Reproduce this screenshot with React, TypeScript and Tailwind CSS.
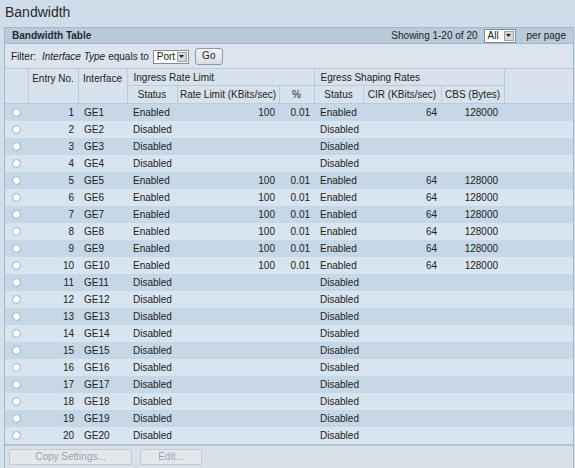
import { FC } from 'react';

type Row = {
  id: number;
  enabled: boolean;
};

const rows: Row[] = Array.from({ length: 20 }, (_, i) => ({
  id: i + 1,
  enabled: i === 0 || (i >= 4 && i <= 9),
}));

const Radio: FC = () => (
  <span className="inline-block h-[9px] w-[9px] rounded-full border border-[#a3aeb9] bg-[radial-gradient(circle_at_40%_40%,#ffffff_50%,#e4e9ee_100%)] align-middle" />
);

const Select: FC<{ value: string; width: string }> = ({ value, width }) => (
  <span className={`inline-flex h-[14px] ${width} items-center justify-between border border-[#7f8c99] bg-white pl-[3px] pr-[1px] align-middle`}>
    <span className="leading-none">{value}</span>
    <span className="flex h-[10px] w-[10px] items-center justify-center border border-[#9aa0a6] bg-[#d7d7d7]">
      <svg width="5" height="3" viewBox="0 0 5 3">
        <path d="M0 0h5L2.5 3z" fill="#222" />
      </svg>
    </span>
  </span>
);

export default function App() {
  return (
    <div
      className="h-[468px] w-[575px] overflow-hidden whitespace-nowrap bg-gradient-to-b from-[#cfdcea] to-[#d7e3ee] text-[10px] text-[#222]"
      style={{ fontFamily: '"Liberation Sans", Arial, sans-serif' }}
    >
      <h1 className="h-[27px] pl-[5px] pt-[3px] text-[14px] leading-[18px] text-[#2a2a2a]">Bandwidth</h1>

      <div className="ml-[4px] w-[570px] border border-[#a7b8c8]">
        <div className="flex h-[16px] items-center justify-between border-b border-[#a7b8c8] bg-[#b9cadb] pl-[7px] pr-[7px]">
          <span className="font-bold text-[#1e2a36]">Bandwidth Table</span>
          <div className="flex items-center gap-[6px]">
            <span>Showing 1-20 of 20</span>
            <Select value="All" width="w-[32px]" />
            <span className="ml-[5px]">per page</span>
          </div>
        </div>

        <div className="flex h-[24px] items-center bg-[#dce5ee] pl-[6px]">
          <span>Filter:</span>
          <span className="ml-[6px] italic">Interface Type</span>
          <span className="ml-[3px]">equals to</span>
          <span className="ml-[4px]">
            <Select value="Port" width="w-[36px]" />
          </span>
          <button className="ml-[6px] h-[17px] w-[28px] rounded-[3px] border border-[#8d9aa7] bg-gradient-to-b from-[#f2f5f7] to-[#d6dde3] text-[10px] leading-none">
            Go
          </button>
        </div>

        <table className="w-full table-fixed border-collapse">
          <colgroup>
            <col className="w-[23px]" />
            <col className="w-[50px]" />
            <col className="w-[49px]" />
            <col className="w-[50px]" />
            <col className="w-[102px]" />
            <col className="w-[35px]" />
            <col className="w-[49px]" />
            <col className="w-[78px]" />
            <col className="w-[63px]" />
            <col />
          </colgroup>
          <thead className="bg-[#d7e2ec]">
            <tr className="h-[17px]">
              <th rowSpan={2} className="border border-l-0 border-[#bccbd9] p-0 font-normal" />
              <th rowSpan={2} className="border border-[#bccbd9] p-0 pt-[2px] align-top font-normal">Entry No.</th>
              <th rowSpan={2} className="border border-[#bccbd9] p-0 pt-[2px] align-top font-normal">Interface</th>
              <th colSpan={3} className="border border-[#bccbd9] p-0 pl-[6px] text-left font-normal">Ingress Rate Limit</th>
              <th colSpan={3} className="border border-[#bccbd9] p-0 pl-[6px] text-left font-normal">Egress Shaping Rates</th>
              <th rowSpan={2} className="border border-r-0 border-[#bccbd9] p-0 font-normal" />
            </tr>
            <tr className="h-[18px]">
              <th className="border border-[#bccbd9] p-0 font-normal">Status</th>
              <th className="border border-[#bccbd9] p-0 font-normal">Rate Limit (KBits/sec)</th>
              <th className="border border-[#bccbd9] p-0 font-normal">%</th>
              <th className="border border-[#bccbd9] p-0 font-normal">Status</th>
              <th className="border border-[#bccbd9] p-0 font-normal">CIR (KBits/sec)</th>
              <th className="border border-[#bccbd9] p-0 font-normal">CBS (Bytes)</th>
            </tr>
          </thead>
          <tbody>
            {rows.map(({ id, enabled }) => (
              <tr key={id} className={`h-[17px] ${id % 2 === 1 ? 'bg-[#c6d7e7]' : 'bg-[#d8e4ef]'}`}>
                <td className="p-0 pl-[7px] leading-none">
                  <Radio />
                </td>
                <td className="p-0 pr-[4px] text-right">{id}</td>
                <td className="p-0 pl-[6px]">GE{id}</td>
                <td className="p-0 pl-[6px]">{enabled ? 'Enabled' : 'Disabled'}</td>
                <td className="p-0 pr-[4px] text-right">{enabled ? '100' : ''}</td>
                <td className="p-0 pr-[4px] text-right">{enabled ? '0.01' : ''}</td>
                <td className="p-0 pl-[6px]">{enabled ? 'Enabled' : 'Disabled'}</td>
                <td className="p-0 pr-[4px] text-right">{enabled ? '64' : ''}</td>
                <td className="p-0 pr-[6px] text-right">{enabled ? '128000' : ''}</td>
                <td className="p-0" />
              </tr>
            ))}
          </tbody>
        </table>

        <div className="flex h-[24px] items-center gap-[8px] border-t-2 border-[#b3c2d0] bg-[#d9e1e8] pl-[4px]">
          <button className="h-[16px] w-[123px] rounded-[2px] border border-[#c3ccd4] bg-[#e3e8ec] text-[10px] leading-none text-[#9aa3ab]">
            Copy Settings...
          </button>
          <button className="h-[16px] w-[62px] rounded-[2px] border border-[#c3ccd4] bg-[#e3e8ec] text-[10px] leading-none text-[#9aa3ab]">
            Edit...
          </button>
        </div>
      </div>
    </div>
  );
}
